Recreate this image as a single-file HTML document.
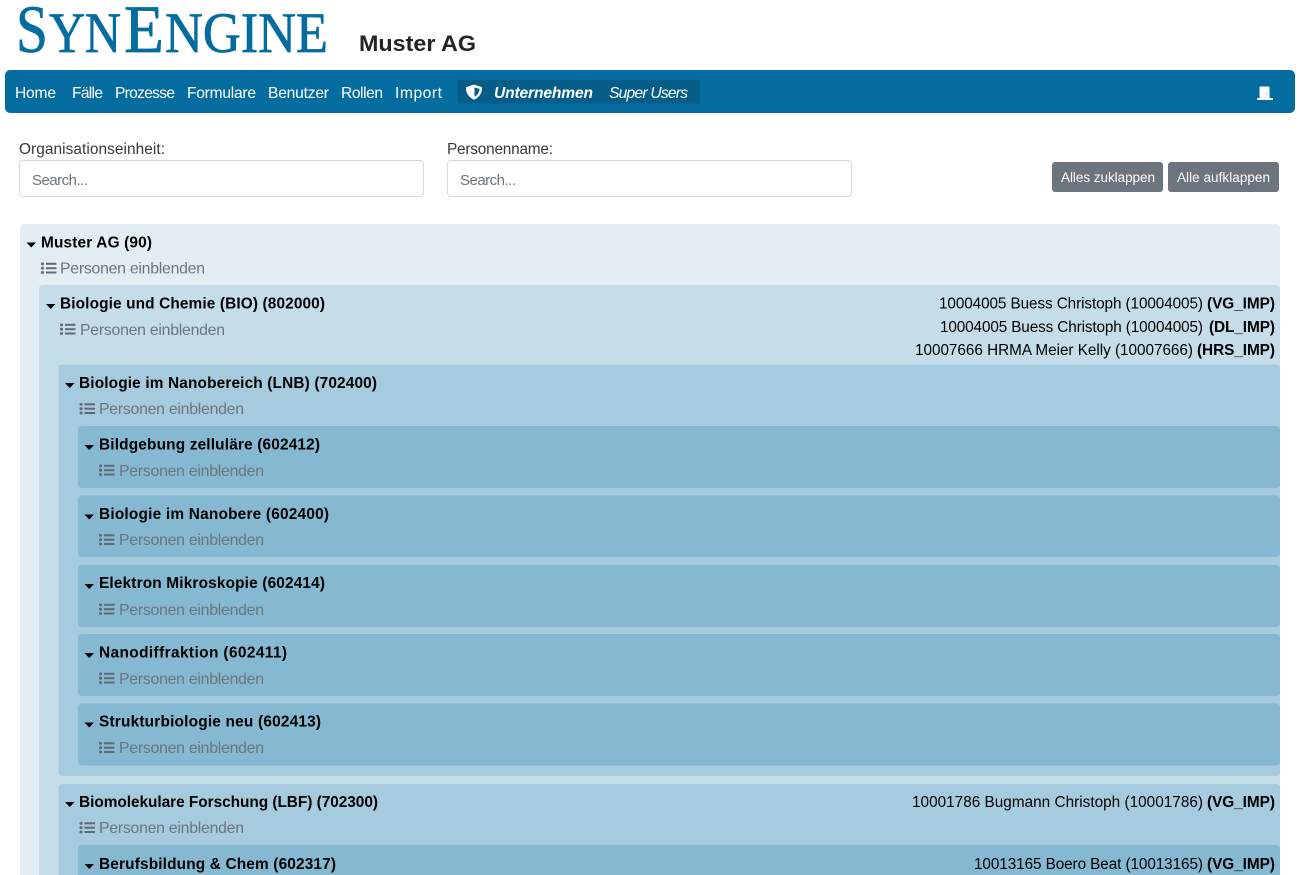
<!DOCTYPE html>
<html lang="de">
<head>
<meta charset="utf-8">
<title>SynEngine</title>
<style>
html,body{margin:0;padding:0;background:#fff;width:1300px;height:875px;overflow:hidden}
svg{display:block}
text{font-family:"Liberation Sans",sans-serif;font-size:15px;fill:#212529;white-space:pre}
.n{fill:#fff;font-size:15.6px}
.t{fill:#000;font-weight:700;font-size:15.4px}
.p{fill:#6c757d;font-size:15.8px}
.r{fill:#000;font-size:15.3px}
.s{fill:#6c757d;font-size:15px}
.l{fill:#343a40;font-size:15.4px}
.b{fill:#fff;font-size:13.5px}
.logo{font-family:"Liberation Serif",serif;fill:#046c9e;stroke:#046c9e;stroke-width:.7px}
</style>
</head>
<body>
<svg xmlns="http://www.w3.org/2000/svg" width="1300" height="875" viewBox="0 0 1300 875">
<defs>
<g id="li" fill="#5f6a73">
<rect x="0" y="0" width="3" height="2.800" rx="1"/><rect x="0" y="4.300" width="3" height="2.800" rx="1"/><rect x="0" y="8.600" width="3" height="2.800" rx="1"/>
<rect x="5" y=".3" width="10.500" height="2"/><rect x="5" y="4.700" width="10.500" height="2"/><rect x="5" y="9" width="10.500" height="2"/>
</g>
<path id="c" d="M0 0h9.500l-4.750 5z" fill="#000"/>
</defs>

<!-- Logo -->
<text class="logo" x="16" y="52" style="font-size:68px" textLength="32" lengthAdjust="spacingAndGlyphs">S</text>
<text class="logo" x="49" y="52" style="font-size:57px" textLength="72" lengthAdjust="spacingAndGlyphs">YN</text>
<text class="logo" x="124" y="52" style="font-size:68px" textLength="40" lengthAdjust="spacingAndGlyphs">E</text>
<text class="logo" x="165" y="52" style="font-size:57px" textLength="163" lengthAdjust="spacingAndGlyphs">NGINE</text>
<text x="359" y="51" style="font-size:22px;font-weight:700;fill:#212529" textLength="117" lengthAdjust="spacingAndGlyphs">Muster AG</text>

<!-- Navbar -->
<rect x="5" y="70" width="1290" height="43" rx="5" fill="#046c9e"/>
<text class="n" x="15" y="98" textLength="41">Home</text>
<text class="n" x="72" y="98" textLength="31">Fälle</text>
<text class="n" x="115" y="98" textLength="60">Prozesse</text>
<text class="n" x="187" y="98" textLength="69">Formulare</text>
<text class="n" x="268" y="98" textLength="61">Benutzer</text>
<text class="n" x="341" y="98" textLength="42">Rollen</text>
<text class="n" x="395" y="98" textLength="47">Import</text>
<rect x="458" y="80" width="242" height="23.500" fill="#055d88"/>
<path d="M474 84.500l8 2.800c.2 5.400-2.200 9.800-8 12.500-5.800-2.700-8.200-7.100-8-12.500z" fill="#fff"/>
<path d="M474.500 87.500v9.400c3.200-1.900 4.900-4.800 5-8z" fill="#055d88"/>
<text class="n" x="494" y="98" style="font-weight:700;font-style:italic" textLength="99">Unternehmen</text>
<text class="n" x="609" y="98" style="font-style:italic" textLength="79">Super Users</text>
<path d="M1259.500 98V87.500q0-1 1-1h8q1 0 1 1V98h3.500v2h-16v-2z" fill="#fff"/>
<rect x="1266" y="93.500" width="1" height="1" fill="#3d8db5"/>

<!-- Filters -->
<text class="l" x="19" y="154" textLength="146">Organisationseinheit:</text>
<rect x="19.500" y="160.500" width="404" height="36" rx="3.500" fill="#fff" stroke="#d3dae0"/>
<text class="s" x="32" y="185" textLength="56">Search...</text>
<text class="l" x="447" y="154" textLength="106">Personenname:</text>
<rect x="447.500" y="160.500" width="404" height="36" rx="3.500" fill="#fff" stroke="#d3dae0"/>
<text class="s" x="460" y="185" textLength="56">Search...</text>
<rect x="1052" y="162" width="111" height="30" rx="3" fill="#6c757d"/>
<text class="b" x="1061" y="182" textLength="94">Alles zuklappen</text>
<rect x="1168" y="162" width="111" height="30" rx="3" fill="#6c757d"/>
<text class="b" x="1177" y="182" textLength="93">Alle aufklappen</text>

<!-- Tree boxes -->
<rect x="20" y="224" width="1260" height="680" rx="4" fill="#e3eef4"/>
<rect x="39" y="285" width="1241" height="620" rx="4" fill="#c5dde9"/>
<rect x="58.500" y="364.500" width="1221.500" height="411.500" rx="4" fill="#a6cade"/>
<rect x="78" y="426" width="1202" height="62" rx="4" fill="#85b8d1"/>
<rect x="78" y="495.500" width="1202" height="61.500" rx="4" fill="#85b8d1"/>
<rect x="78" y="565" width="1202" height="62" rx="4" fill="#85b8d1"/>
<rect x="78" y="634" width="1202" height="62" rx="4" fill="#85b8d1"/>
<rect x="78" y="703.500" width="1202" height="62" rx="4" fill="#85b8d1"/>
<rect x="58.500" y="784" width="1221.500" height="120" rx="4" fill="#a6cade"/>
<rect x="78" y="845" width="1202" height="60" rx="4" fill="#85b8d1"/>

<!-- Muster AG -->
<use href="#c" x="26.500" y="242.500"/>
<text class="t" x="41" y="247.500" textLength="111">Muster AG (90)</text>
<use href="#li" x="41" y="262.500"/>
<text class="p" x="60" y="273.500" textLength="145">Personen einblenden</text>

<!-- BIO -->
<use href="#c" x="46" y="304"/>
<text class="t" x="60" y="308.500" textLength="265">Biologie und Chemie (BIO) (802000)</text>
<use href="#li" x="60" y="323.500"/>
<text class="p" x="80" y="335" textLength="145">Personen einblenden</text>
<text class="r" x="939" y="308.500" textLength="264">10004005 Buess Christoph (10004005)</text>
<text class="t" x="1207" y="308.500" textLength="68">(VG_IMP)</text>
<text class="r" x="940" y="332" textLength="263">10004005 Buess Christoph (10004005)</text>
<text class="t" x="1209" y="332" textLength="66">(DL_IMP)</text>
<text class="r" x="915" y="355" textLength="278">10007666 HRMA Meier Kelly (10007666)</text>
<text class="t" x="1197" y="355" textLength="78">(HRS_IMP)</text>

<!-- LNB -->
<use href="#c" x="65" y="383"/>
<text class="t" x="79" y="388" textLength="298">Biologie im Nanobereich (LNB) (702400)</text>
<use href="#li" x="79.500" y="403"/>
<text class="p" x="99" y="414" textLength="145">Personen einblenden</text>

<use href="#c" x="84.500" y="445"/>
<text class="t" x="99" y="449.500" textLength="221">Bildgebung zelluläre (602412)</text>
<use href="#li" x="99" y="464.500"/>
<text class="p" x="119" y="476" textLength="145">Personen einblenden</text>

<use href="#c" x="84.500" y="514.500"/>
<text class="t" x="99" y="519" textLength="230">Biologie im Nanobere (602400)</text>
<use href="#li" x="99" y="534"/>
<text class="p" x="119" y="545" textLength="145">Personen einblenden</text>

<use href="#c" x="84.500" y="584"/>
<text class="t" x="99" y="588" textLength="226">Elektron Mikroskopie (602414)</text>
<use href="#li" x="99" y="603.500"/>
<text class="p" x="119" y="615" textLength="145">Personen einblenden</text>

<use href="#c" x="84.500" y="653"/>
<text class="t" x="99" y="657.500" textLength="188">Nanodiffraktion (602411)</text>
<use href="#li" x="99" y="672.500"/>
<text class="p" x="119" y="684" textLength="145">Personen einblenden</text>

<use href="#c" x="84.500" y="722.500"/>
<text class="t" x="99" y="726.500" textLength="222">Strukturbiologie neu (602413)</text>
<use href="#li" x="99" y="742"/>
<text class="p" x="119" y="753" textLength="145">Personen einblenden</text>

<!-- LBF -->
<use href="#c" x="65" y="802"/>
<text class="t" x="79" y="807" textLength="299">Biomolekulare Forschung (LBF) (702300)</text>
<use href="#li" x="79.500" y="822"/>
<text class="p" x="99" y="833" textLength="145">Personen einblenden</text>
<text class="r" x="912" y="807" textLength="291">10001786 Bugmann Christoph (10001786)</text>
<text class="t" x="1207" y="807" textLength="68">(VG_IMP)</text>

<use href="#c" x="84.500" y="864"/>
<text class="t" x="99" y="869" textLength="237">Berufsbildung &amp; Chem (602317)</text>
<text class="r" x="974" y="869" textLength="229">10013165 Boero Beat (10013165)</text>
<text class="t" x="1207" y="869" textLength="68">(VG_IMP)</text>
</svg>
</body>
</html>
